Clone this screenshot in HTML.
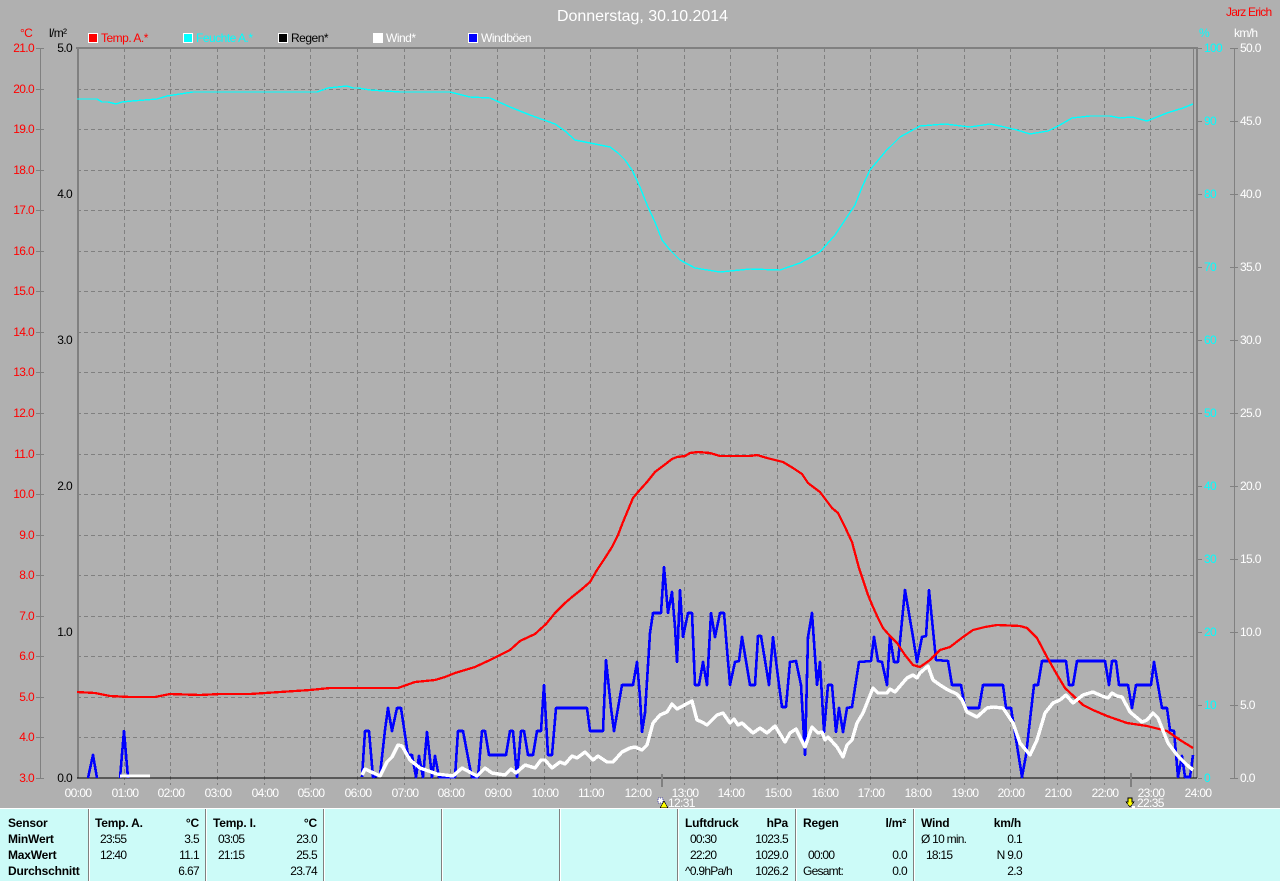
<!DOCTYPE html>
<html><head><meta charset="utf-8"><title>Donnerstag, 30.10.2014</title>
<style>
html,body{margin:0;padding:0;background:#b0b0b0}
svg{display:block}
text{font-family:"Liberation Sans",sans-serif;font-size:12px;letter-spacing:-.65px}
.r{fill:#f00;text-anchor:end}
.k{fill:#000;text-anchor:end}
.c{fill:#0ff}
.w{fill:#fff}
.h{fill:#fff;text-anchor:middle}
.b{font-weight:bold;fill:#000;letter-spacing:-.2px}
.p{fill:#000;letter-spacing:-.75px}
.e{fill:#000;text-anchor:end}
.be{font-weight:bold;fill:#000;text-anchor:end;letter-spacing:-.2px}
</style></head><body>
<svg width="1280" height="881" viewBox="0 0 1280 881" xmlns="http://www.w3.org/2000/svg">
<rect width="1280" height="881" fill="#b0b0b0"/>
<text x="557" y="21" style="font-size:16px;letter-spacing:0;font-weight:normal" fill="#fff" textLength="171">Donnerstag, 30.10.2014</text>
<text x="1226" y="16" fill="#f00" style="letter-spacing:-.8px">Jarz Erich</text>
<text x="20" y="37" fill="#f00">°C</text>
<text x="49" y="37" fill="#000">l/m²</text>
<text x="1199" y="37" class="c">%</text>
<text x="1234" y="37" class="w">km/h</text>

<g stroke="#fff" stroke-width="1" shape-rendering="crispEdges">
<rect x="88.5" y="33.5" width="9" height="9" fill="#f00"/>
<rect x="183.5" y="33.5" width="9" height="9" fill="#0ff"/>
<rect x="278.5" y="33.5" width="9" height="9" fill="#000"/>
<rect x="373.5" y="33.5" width="9" height="9" fill="#fff"/>
<rect x="468.5" y="33.5" width="9" height="9" fill="#00f"/>
</g>
<text x="101" y="42" fill="#f00" style="letter-spacing:-.5px">Temp. A.*</text>
<text x="196" y="42" class="c" style="letter-spacing:-.5px">Feuchte A.*</text>
<text x="291" y="42" fill="#000" style="letter-spacing:-.5px">Regen*</text>
<text x="386" y="42" class="w" style="letter-spacing:-.5px">Wind*</text>
<text x="481" y="42" class="w" style="letter-spacing:-.5px">Windböen</text>

<g shape-rendering="crispEdges" fill="none">
<path stroke="#808080" stroke-width="1" stroke-dasharray="4 3" d="M124.5 48V785M170.5 48V785M217.5 48V785M264.5 48V785M310.5 48V785M357.5 48V785M404.5 48V785M450.5 48V785M497.5 48V785M544.5 48V785M590.5 48V785M637.5 48V785M684.5 48V785M730.5 48V785M777.5 48V785M824.5 48V785M870.5 48V785M917.5 48V785M964.5 48V785M1010.5 48V785M1057.5 48V785M1104.5 48V785M1150.5 48V785"/>
<path stroke="#808080" stroke-width="1" stroke-dasharray="4 3" d="M77 89.5H1197M77 129.5H1197M77 170.5H1197M77 210.5H1197M77 251.5H1197M77 291.5H1197M77 332.5H1197M77 372.5H1197M77 413.5H1197M77 454.5H1197M77 494.5H1197M77 535.5H1197M77 575.5H1197M77 616.5H1197M77 656.5H1197M77 697.5H1197M77 737.5H1197"/>
<path stroke="#808080" stroke-width="2" d="M76 48H1198M78 47V778M1197 47V778"/>
<path stroke="#808080" stroke-width="1" d="M1193.5 48V778"/>
<path stroke="#808080" stroke-width="1" d="M40.5 48V778M1234.5 48V778M36 48.5H44M36 89.5H44M36 129.5H44M36 170.5H44M36 210.5H44M36 251.5H44M36 291.5H44M36 332.5H44M36 372.5H44M36 413.5H44M36 454.5H44M36 494.5H44M36 535.5H44M36 575.5H44M36 616.5H44M36 656.5H44M36 697.5H44M36 737.5H44M36 778.5H44"/>
<path stroke="#808080" stroke-width="1" d="M1198 48.5H1202M1198 121.5H1202M1198 194.5H1202M1198 267.5H1202M1198 340.5H1202M1198 413.5H1202M1198 486.5H1202M1198 559.5H1202M1198 632.5H1202M1198 705.5H1202M1198 778.5H1202M1230 48.5H1238M1230 121.5H1238M1230 194.5H1238M1230 267.5H1238M1230 340.5H1238M1230 413.5H1238M1230 486.5H1238M1230 559.5H1238M1230 632.5H1238M1230 705.5H1238M1230 778.5H1238"/>
</g>

<g>
<text class="r" x="34" y="52">21.0</text><text class="r" x="34" y="93">20.0</text><text class="r" x="34" y="133">19.0</text><text class="r" x="34" y="174">18.0</text><text class="r" x="34" y="214">17.0</text><text class="r" x="34" y="255">16.0</text><text class="r" x="34" y="295">15.0</text><text class="r" x="34" y="336">14.0</text><text class="r" x="34" y="376">13.0</text><text class="r" x="34" y="417">12.0</text><text class="r" x="34" y="458">11.0</text><text class="r" x="34" y="498">10.0</text><text class="r" x="34" y="539">9.0</text><text class="r" x="34" y="579">8.0</text><text class="r" x="34" y="620">7.0</text><text class="r" x="34" y="660">6.0</text><text class="r" x="34" y="701">5.0</text><text class="r" x="34" y="741">4.0</text><text class="r" x="34" y="782">3.0</text>
<text class="k" x="72" y="52">5.0</text><text class="k" x="72" y="198">4.0</text><text class="k" x="72" y="344">3.0</text><text class="k" x="72" y="490">2.0</text><text class="k" x="72" y="636">1.0</text><text class="k" x="72" y="782">0.0</text>
<text class="c" x="1204" y="52">100</text><text class="c" x="1204" y="125">90</text><text class="c" x="1204" y="198">80</text><text class="c" x="1204" y="271">70</text><text class="c" x="1204" y="344">60</text><text class="c" x="1204" y="417">50</text><text class="c" x="1204" y="490">40</text><text class="c" x="1204" y="563">30</text><text class="c" x="1204" y="636">20</text><text class="c" x="1204" y="709">10</text><text class="c" x="1204" y="782">0</text>
<text class="w" x="1240" y="52">50.0</text><text class="w" x="1240" y="125">45.0</text><text class="w" x="1240" y="198">40.0</text><text class="w" x="1240" y="271">35.0</text><text class="w" x="1240" y="344">30.0</text><text class="w" x="1240" y="417">25.0</text><text class="w" x="1240" y="490">20.0</text><text class="w" x="1240" y="563">15.0</text><text class="w" x="1240" y="636">10.0</text><text class="w" x="1240" y="709">5.0</text><text class="w" x="1240" y="782">0.0</text>
<text class="h" x="78" y="797">00:00</text><text class="h" x="125" y="797">01:00</text><text class="h" x="171" y="797">02:00</text><text class="h" x="218" y="797">03:00</text><text class="h" x="265" y="797">04:00</text><text class="h" x="311" y="797">05:00</text><text class="h" x="358" y="797">06:00</text><text class="h" x="405" y="797">07:00</text><text class="h" x="451" y="797">08:00</text><text class="h" x="498" y="797">09:00</text><text class="h" x="545" y="797">10:00</text><text class="h" x="591" y="797">11:00</text><text class="h" x="638" y="797">12:00</text><text class="h" x="685" y="797">13:00</text><text class="h" x="731" y="797">14:00</text><text class="h" x="778" y="797">15:00</text><text class="h" x="825" y="797">16:00</text><text class="h" x="871" y="797">17:00</text><text class="h" x="918" y="797">18:00</text><text class="h" x="965" y="797">19:00</text><text class="h" x="1011" y="797">20:00</text><text class="h" x="1058" y="797">21:00</text><text class="h" x="1105" y="797">22:00</text><text class="h" x="1151" y="797">23:00</text><text class="h" x="1198" y="797">24:00</text>
</g>

<g fill="none" shape-rendering="crispEdges" stroke-linejoin="round">
<polyline stroke="#0ff" stroke-width="1.4" points="77,99 97,99 102,102 108,102 116,104 122,102 132,101 157,99 167,96 180,94 193,92 317,92 328,88 347,86 353,88 358,88 370,90 400,92 450,92 470,97 490,98 510,107 530,115 555,124 565,131 575,140 590,143 610,147 618,153 625,160 632,170 640,187 648,207 655,222 662,240 670,250 680,260 695,268 720,272 750,269 780,270 800,263 820,252 835,235 845,220 855,205 863,185 870,170 885,152 900,137 920,126 945,124 970,127 990,124 1000,126 1017,130 1030,134 1048,131 1060,125 1072,118 1090,116 1110,116 1120,118 1132,117 1147,121 1167,113 1183,108 1193,104"/>
<line x1="77" y1="778" x2="1197" y2="778" stroke="#000" stroke-width="1"/>
<polyline stroke="#00f" stroke-width="2.6" points="88,778 93,755 97,778"/>
<polyline stroke="#00f" stroke-width="2.6" points="120,778 124,731 128,778"/>
<polyline stroke="#00f" stroke-width="2.6" points="362,777 365,731 369,731 373,777 380,775 385,730 388,708 392,731 397,708 401,708 408,755 412,755 416,777 419,756 423,777 427,732 432,777 435,756 439,777 455,777 458,731 463,731 470,768 472,777 478,777 482,731 485,731 489,755 506,755 510,731 513,731 517,777 521,731 524,731 528,755 533,755 537,731 541,731 544,685 548,755 552,755 556,708 587,708 590,731 603,731 606,660 611,708 614,731 622,685 633,685 637,662 640,697 642,732 645,713 650,633 653,613 661,613 664,567 668,613 672,592 675,627 677,662 680,590 683,637 688,613 692,613 695,685 699,685 703,662 707,685 711,613 715,637 720,613 724,613 730,685 735,662 739,661 742,637 750,685 755,685 758,636 761,636 769,685 773,637 779,685 782,707 786,707 790,662 796,661 801,685 805,755 808,637 812,613 817,685 820,662 824,732 828,685 832,685 836,732 839,708 843,732 847,708 852,707 859,662 871,661 874,637 878,661 882,662 887,685 890,637 894,662 898,662 905,590 913,637 917,662 922,637 926,636 929,590 936,660 948,661 952,685 961,685 965,708 979,708 983,685 1003,685 1006,708 1011,708 1022,777 1026,755 1034,685 1038,685 1042,661 1066,661 1069,685 1073,685 1077,661 1105,661 1109,685 1112,661 1116,661 1119,685 1128,685 1132,708 1136,685 1151,685 1154,662 1162,708 1167,708 1170,730 1174,731 1178,777 1182,756 1185,777 1190,777 1193,755"/>
<polyline stroke="#f00" stroke-width="2.3" points="77,692 95,693 110,696 130,697 155,697 170,694 200,695 220,694 250,694 280,692 310,690 330,688 398,688 415,682 435,680 445,677 455,673 475,667 490,660 500,655 510,650 520,641 535,634 546,624 555,613 565,603 572,597 582,589 590,582 597,570 605,558 612,547 618,535 623,522 628,510 633,498 638,492 647,482 655,472 663,466 672,459 677,457 685,456 690,453 698,452 710,453 720,456 733,456 740,456 750,456 757,455 767,458 783,462 793,468 802,474 808,483 820,492 832,508 838,513 845,527 852,542 859,568 863,580 868,595 873,607 878,618 883,628 890,636 897,643 905,655 913,665 920,667 930,660 940,650 950,647 963,637 973,630 985,627 997,625 1020,626 1027,628 1037,638 1047,657 1056,673 1065,688 1083,705 1093,710 1107,716 1127,723 1147,726 1167,731 1180,740 1193,748"/>
<polyline stroke="#fff" stroke-width="3" points="120,776 150,776"/>
<polyline stroke="#fff" stroke-width="3.4" points="362,775 365,769 380,776 387,762 392,757 398,745 402,746 410,760 420,768 437,774 453,776 462,768 477,776 485,768 492,773 505,775 511,769 516,773 525,765 535,768 541,760 545,760 552,768 560,762 565,764 572,756 577,758 585,752 593,760 598,756 607,762 613,762 622,752 630,748 635,747 642,750 647,745 653,723 660,715 667,712 672,704 677,709 692,701 697,720 702,722 707,725 717,715 723,713 730,723 734,719 738,725 742,723 753,733 760,728 767,733 775,726 785,742 790,733 796,729 805,747 812,727 818,733 822,732 825,740 828,737 837,747 843,757 847,745 852,740 857,723 863,713 873,688 878,693 887,693 890,689 895,692 907,678 913,675 917,678 920,673 928,666 933,680 940,685 948,690 957,694 962,700 967,712 977,717 987,708 993,707 1003,708 1013,723 1020,743 1030,755 1037,740 1045,713 1053,703 1060,700 1066,695 1073,703 1083,695 1093,692 1102,696 1108,698 1112,693 1117,696 1122,697 1130,712 1142,722 1147,720 1153,713 1158,718 1168,743 1177,755 1187,765 1193,770"/>
<path stroke="#808080" stroke-width="2" d="M662 774V787M1131 773V787"/>
</g>

<text class="w" x="668" y="807">12:31</text>
<text class="w" x="1137" y="807">22:35</text>
<g shape-rendering="crispEdges">
<rect x="658" y="798" width="5" height="5" fill="#fff" stroke="#55a" stroke-width="1" stroke-dasharray="1 1"/>
<path d="M664 801L668 808H660Z" fill="#ff0" stroke="#000" stroke-width=".6"/>
<path d="M1128 798H1132V802H1134L1130 807L1126 802H1128Z" fill="#ff0" stroke="#000" stroke-width=".6"/>
<rect x="1132" y="806" width="3" height="2" fill="#fff"/>
</g>

<rect x="0" y="808" width="1280" height="73" fill="#ccfbf8"/>
<rect x="0" y="808" width="1280" height="1" fill="#fff"/>
<path shape-rendering="crispEdges" stroke="#808080" stroke-width="1" d="M88.5 809V881M205.5 809V881M323.5 809V881M441.5 809V881M559.5 809V881M677.5 809V881M795.5 809V881M913.5 809V881"/>
<path shape-rendering="crispEdges" stroke="#fff" stroke-width="1" d="M89.5 809V881M206.5 809V881M324.5 809V881M442.5 809V881M560.5 809V881M678.5 809V881M796.5 809V881M914.5 809V881"/>

<text class="b" x="8" y="827">Sensor</text>
<text class="b" x="8" y="843">MinWert</text>
<text class="b" x="8" y="859">MaxWert</text>
<text class="b" x="8" y="875">Durchschnitt</text>

<text class="b" x="95" y="827">Temp. A.</text><text class="be" x="199" y="827">°C</text>
<text class="p" x="100" y="843">23:55</text><text class="e" x="199" y="843">3.5</text>
<text class="p" x="100" y="859">12:40</text><text class="e" x="199" y="859">11.1</text>
<text class="e" x="199" y="875">6.67</text>

<text class="b" x="213" y="827">Temp. I.</text><text class="be" x="317" y="827">°C</text>
<text class="p" x="218" y="843">03:05</text><text class="e" x="317" y="843">23.0</text>
<text class="p" x="218" y="859">21:15</text><text class="e" x="317" y="859">25.5</text>
<text class="e" x="317" y="875">23.74</text>

<text class="b" x="685" y="827">Luftdruck</text><text class="be" x="788" y="827">hPa</text>
<text class="p" x="690" y="843">00:30</text><text class="e" x="788" y="843">1023.5</text>
<text class="p" x="690" y="859">22:20</text><text class="e" x="788" y="859">1029.0</text>
<text class="p" x="685" y="875">^0.9hPa/h</text><text class="e" x="788" y="875">1026.2</text>

<text class="b" x="803" y="827">Regen</text><text class="be" x="906" y="827">l/m²</text>
<text class="p" x="808" y="859">00:00</text><text class="e" x="907" y="859">0.0</text>
<text class="p" x="803" y="875">Gesamt:</text><text class="e" x="907" y="875">0.0</text>

<text class="b" x="921" y="827">Wind</text><text class="be" x="1021" y="827">km/h</text>
<text class="p" x="921" y="843">Ø 10 min.</text><text class="e" x="1022" y="843">0.1</text>
<text class="p" x="926" y="859">18:15</text><text class="e" x="1022" y="859">N 9.0</text>
<text class="e" x="1022" y="875">2.3</text>
</svg>
</body></html>
